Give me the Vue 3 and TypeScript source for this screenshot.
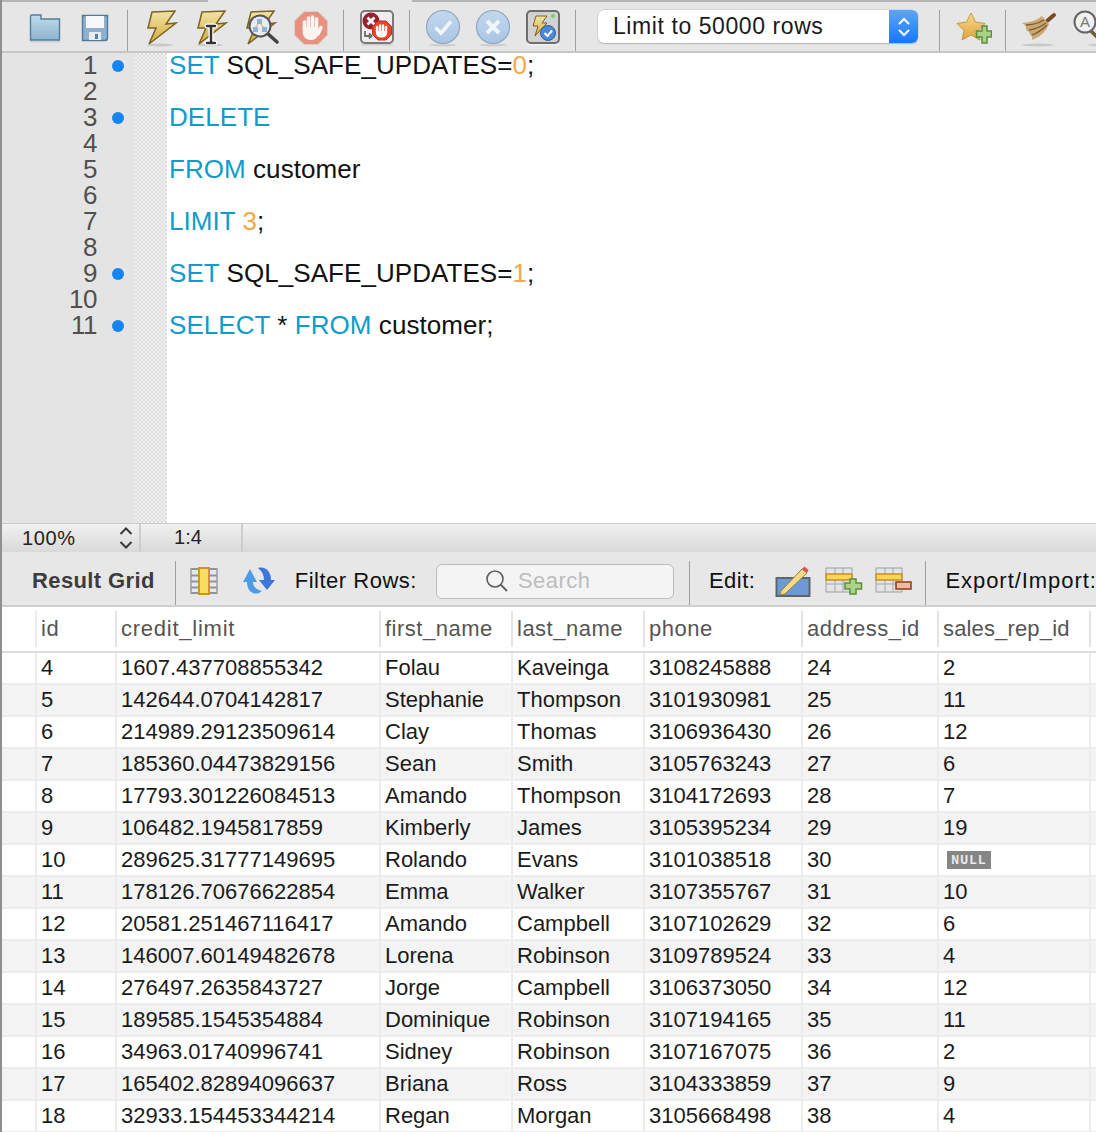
<script setup lang="ts">
const gutter: number[] = [1, 2, 3, 4, 5, 6, 7, 8, 9, 10, 11]
const marked = new Set<number>([1, 3, 9, 11])
const columns: string[] = ['id', 'credit_limit', 'first_name', 'last_name', 'phone', 'address_id', 'sales_rep_id']
const rows: string[][] = [
  ['4', '1607.437708855342', 'Folau', 'Kaveinga', '3108245888', '24', '2'],
  ['5', '142644.0704142817', 'Stephanie', 'Thompson', '3101930981', '25', '11'],
  ['6', '214989.29123509614', 'Clay', 'Thomas', '3106936430', '26', '12'],
  ['7', '185360.04473829156', 'Sean', 'Smith', '3105763243', '27', '6'],
  ['8', '17793.301226084513', 'Amando', 'Thompson', '3104172693', '28', '7'],
  ['9', '106482.1945817859', 'Kimberly', 'James', '3105395234', '29', '19'],
  ['10', '289625.31777149695', 'Rolando', 'Evans', '3101038518', '30', 'NULL'],
  ['11', '178126.70676622854', 'Emma', 'Walker', '3107355767', '31', '10'],
  ['12', '20581.251467116417', 'Amando', 'Campbell', '3107102629', '32', '6'],
  ['13', '146007.60149482678', 'Lorena', 'Robinson', '3109789524', '33', '4'],
  ['14', '276497.2635843727', 'Jorge', 'Campbell', '3106373050', '34', '12'],
  ['15', '189585.1545354884', 'Dominique', 'Robinson', '3107194165', '35', '11'],
  ['16', '34963.01740996741', 'Sidney', 'Robinson', '3107167075', '36', '2'],
  ['17', '165402.82894096637', 'Briana', 'Ross', '3104333859', '37', '9'],
  ['18', '32933.154453344214', 'Regan', 'Morgan', '3105668498', '38', '4'],
]
const boltPath = 'M9 3 L32 2 L23 15 L33 14 L6 35 L13 19 L5 19 Z'
</script>

<template>
  <div class="page">
    <svg class="defs" width="0" height="0">
      <defs>
        <linearGradient id="boltFill" x1="0" y1="0" x2="0" y2="1"><stop offset="0" stop-color="#f2e4a6"/><stop offset="1" stop-color="#d2ab3c"/></linearGradient>
        <linearGradient id="folderFill" x1="0" y1="0" x2="0" y2="1"><stop offset="0" stop-color="#c4dbea"/><stop offset="1" stop-color="#8cb4cf"/></linearGradient>
        <linearGradient id="starFill" x1="0" y1="0" x2="0" y2="1"><stop offset="0" stop-color="#f6d98a"/><stop offset="1" stop-color="#e2a33c"/></linearGradient>
        <linearGradient id="roundFill" x1="0" y1="0" x2="0" y2="1"><stop offset="0" stop-color="#c3d8ee"/><stop offset="1" stop-color="#a9c5e4"/></linearGradient>
      </defs>
    </svg>
    <div class="topline"><span class="tl-a"></span><span class="tl-gap"></span><span class="tl-b"></span></div>
    <div class="toolbar">
      <span class="lead"></span>
      <span class="slot">
        <svg width="32" height="30" viewBox="0 0 32 30"><path d="M1.500 3.500 Q1.500 2 3 2 H12 V6 H30.500 V27 H1.500 Z" fill="url(#folderFill)" stroke="#4d7f9e" stroke-width="1.400"/><rect x="1" y="28" width="30" height="1.500" fill="#cfcfcf"/></svg>
      </span>
      <span class="slot">
        <svg width="28" height="28" viewBox="0 0 28 28"><path d="M1.500 1.500 H26.500 V24 Q26.500 26.500 24 26.500 H1.500 Z" fill="#8fb0cb" stroke="#4f7a9b" stroke-width="1.400"/><rect x="5" y="2" width="18" height="12" fill="#f6f8fb"/><rect x="8" y="18" width="12" height="8" fill="#e6edf2"/><rect x="14" y="20" width="3" height="5" fill="#5b7f9b"/></svg>
      </span>
      <span class="sep"></span>
      <span class="slot">
        <svg width="36" height="38" viewBox="0 0 36 38"><ellipse cx="17" cy="36" rx="13" ry="1.500" fill="#c9c9c9"/><path :d="boltPath" fill="url(#boltFill)" stroke="#7d6220" stroke-width="1.500"/></svg>
      </span>
      <span class="slot">
        <svg width="36" height="38" viewBox="0 0 36 38"><ellipse cx="17" cy="36" rx="13" ry="1.500" fill="#c9c9c9"/><path :d="boltPath" fill="url(#boltFill)" stroke="#7d6220" stroke-width="1.500"/><path d="M14 17 H22 M18 17 V34 M14 34 H22" stroke="#fff" stroke-width="5" stroke-linecap="round"/><path d="M14 17 H22 M18 17 V34 M14 34 H22" stroke="#333" stroke-width="2.400" stroke-linecap="round"/></svg>
      </span>
      <span class="slot">
        <svg width="38" height="38" viewBox="0 0 38 38"><path :d="boltPath" fill="url(#boltFill)" stroke="#7d6220" stroke-width="1.500"/><path d="M25 24 L35 33" stroke="#444" stroke-width="3.500" stroke-linecap="round"/><circle cx="18" cy="17" r="10.500" fill="#e7ecf1" stroke="#555" stroke-width="2"/><rect x="15" y="10" width="5" height="5" fill="#8fb3d9"/><rect x="11" y="18" width="5" height="5" fill="#8fb3d9"/><rect x="20" y="18" width="5" height="5" fill="#8fb3d9"/><path d="M17 14 L13 19 M18 14 L22 19" stroke="#d1ad4c"/></svg>
      </span>
      <span class="slot">
        <svg width="36" height="36" viewBox="0 0 36 36"><path d="M11 1.500 H25 L34.500 11 V25 L25 34.500 H11 L1.500 25 V11 Z" fill="#e9917f" stroke="#d9d0cc" stroke-width="1"/><g stroke="#fbf4f1" stroke-width="3.600" stroke-linecap="round" fill="none"><path d="M11.500 19 V12"/><path d="M15.500 17 V8"/><path d="M19.500 17 V7"/><path d="M23.500 18 V9"/><path d="M25 24 L28 17.500"/></g><path d="M9.700 17 H25.300 V24 Q24 30 17.500 30 Q11 30 9.700 23 Z" fill="#fbf4f1"/></svg>
      </span>
      <span class="sep"></span>
      <span class="slot">
        <svg width="34" height="36" viewBox="0 0 34 36"><rect x="1" y="1" width="32" height="32" rx="4" fill="#eeeeee" stroke="#7a7a7a" stroke-width="2"/><rect x="1" y="34" width="32" height="1.500" fill="#cfcfcf"/><circle cx="11" cy="11" r="8.500" fill="#96232c"/><path d="M7.500 7.500 L14.500 14.500 M14.500 7.500 L7.500 14.500" stroke="#fff" stroke-width="2.800"/><path d="M18 11 H26 L31.500 16.500 V24.500 L26 30 H18 L12.500 24.500 V16.500 Z" fill="#e8452c" stroke="#c2331e"/><path d="M17 22 V17 M20 21 V15.500 M23 21 V15.500 M26 22 V17" stroke="#fff" stroke-width="2.400" stroke-linecap="round"/><path d="M16 21 H27 V24 Q26 27.500 21.500 27.500 Q17 27.500 16 24 Z" fill="#fff"/><path d="M5 21 V26 H11 M9 23.500 L11.500 26 L9 28.500" stroke="#6d6d6d" stroke-width="1.800" fill="none"/></svg>
      </span>
      <span class="sep"></span>
      <span class="slot">
        <svg width="36" height="38" viewBox="0 0 36 38"><ellipse cx="18" cy="36" rx="14" ry="1.500" fill="#cfcfcf"/><circle cx="18" cy="18" r="16.500" fill="url(#roundFill)" stroke="#8da5be" stroke-width="1.200"/><path d="M10.500 18.500 L16 24 L26 12.500" fill="none" stroke="#f1f4f8" stroke-width="3.600"/></svg>
      </span>
      <span class="slot">
        <svg width="36" height="38" viewBox="0 0 36 38"><ellipse cx="18" cy="36" rx="14" ry="1.500" fill="#cfcfcf"/><circle cx="18" cy="18" r="16.500" fill="url(#roundFill)" stroke="#8da5be" stroke-width="1.200"/><path d="M12 12 L24 24 M24 12 L12 24" stroke="#f1f4f8" stroke-width="4"/></svg>
      </span>
      <span class="slot">
        <svg width="34" height="36" viewBox="0 0 34 36"><rect x="1" y="1" width="32" height="32" rx="4" fill="#d2d2d2" stroke="#6e6e6e" stroke-width="2"/><rect x="1" y="34" width="32" height="1.500" fill="#f2f2f2"/><path d="M10 6 H21 L16 13 H21 L9 26 L12 16 H7 Z" fill="url(#boltFill)" stroke="#7d6220"/><circle cx="27" cy="6" r="2" fill="#7bcf5f"/><circle cx="22" cy="23" r="7.500" fill="#4c89d8" stroke="#2e5f9e"/><path d="M18.500 23 L21.500 26 L26 20.500" fill="none" stroke="#fff" stroke-width="2"/></svg>
      </span>
      <span class="sep"></span>
      <div class="limit">
        <span class="limit-text">Limit to 50000 rows</span>
        <span class="stepper">
          <svg width="14" height="22" viewBox="0 0 14 22"><path d="M2 8 L7 3 L12 8 M2 14 L7 19 L12 14" fill="none" stroke="#fff" stroke-width="2"/></svg>
        </span>
      </div>
      <span class="sep sep-limit"></span>
      <span class="slot">
        <svg class="nudge" width="36" height="34" viewBox="0 0 36 34"><path d="M15 2 L19.500 11 L29 12.500 L22 19.500 L24 29 L15 24 L6 29 L8 19.500 L1 12.500 L10.500 11 Z" fill="url(#starFill)" stroke="#c29a45"/><path d="M26 15 H31 V20 H35.500 V26 H31 V32 H26 V26 H20.500 V20 H26 Z" fill="#a6d388" stroke="#5e8f3a" stroke-width="1.500"/></svg>
      </span>
      <span class="sep"></span>
      <span class="slot">
        <svg width="36" height="38" viewBox="0 0 36 38"><ellipse cx="17" cy="36" rx="16" ry="1.500" fill="#c9c9c9"/><path d="M26 12 L33 6" stroke="#7a4b1f" stroke-width="4" stroke-linecap="round"/><path d="M1 14 Q14 13 21 7 L28 15 Q24 26 11 31 Q12 27 9 26 Q9 23 5 21 Q6 17 1 14 Z" fill="#c9a873"/><path d="M5 16 Q14 16 23 11 M8 21 Q17 20 25 14 M11 26 Q19 23 26 16" stroke="#7f5e2f" fill="none" stroke-width="1.300"/></svg>
      </span>
      <span class="slot">
        <svg class="nudge-a" width="34" height="38" viewBox="0 0 34 38"><ellipse cx="24" cy="36" rx="9" ry="1.500" fill="#cfcfcf"/><path d="M18 22 L28 32" stroke="#7a5a2c" stroke-width="3.500"/><circle cx="12" cy="13" r="10.500" fill="#f0f0f0" stroke="#666" stroke-width="2"/><text x="12" y="18" class="a-glyph">A</text></svg>
      </span>
    </div>

    <div class="editor">
      <div class="gutter">
        <div v-for="n in gutter" :key="n" class="gutter-row">
          <span class="gutter-num">{{ n }}</span>
          <span class="dot-cell"><span v-if="marked.has(n)" class="dot"></span></span>
        </div>
      </div>
      <div class="fold"></div>
      <div class="code">
        <div class="line"><span class="kw">SET</span> SQL_SAFE_UPDATES=<span class="num">0</span>;</div>
        <div class="line"><span class="kw">DELETE</span></div>
        <div class="line"><span class="kw">FROM</span> customer</div>
        <div class="line"><span class="kw">LIMIT</span> <span class="num">3</span>;</div>
        <div class="line"><span class="kw">SET</span> SQL_SAFE_UPDATES=<span class="num">1</span>;</div>
        <div class="line"><span class="kw">SELECT</span> * <span class="kw">FROM</span> customer;</div>
      </div>
    </div>

    <div class="status">
      <span class="zoom-cell">
        <span class="zoom-val">100%</span>
        <svg width="16" height="26" viewBox="0 0 16 26"><path d="M2.500 9 L8 3.500 L13.500 9 M2.500 17 L8 22.500 L13.500 17" fill="none" stroke="#3a3a3a" stroke-width="2"/></svg>
      </span>
      <span class="pos-cell">1:4</span>
    </div>

    <div class="result-bar">
      <span class="rg-title">Result Grid</span>
      <span class="rsep rsep-1"></span>
      <svg class="ic-grid" width="28" height="28" viewBox="0 0 28 28"><rect x="1" y="1" width="26" height="26" fill="#e6e8ea"/><path d="M1 2 H27 M1 8.500 H27 M1 14.500 H27 M1 20.500 H27 M1 26 H27" stroke="#8f959a" stroke-width="2"/><path d="M1 1 V27 M27 1 V27" stroke="#9a9ea2" stroke-width="1.500"/><rect x="9" y="1" width="10" height="26" fill="#f9dc62" stroke="#d0922a" stroke-width="2"/></svg>
      <svg class="ic-refresh" width="34" height="28" viewBox="0 0 34 28"><path d="M1 15 L8 2 L15 15 H11 C11 20 15 23 20 24 C15 29 5 27 5 15 Z" fill="#4f9ce6"/><path d="M16 1 C24 -1 29 5 29 13 H33 L25 23 L17 13 H22 C22 8 20 4 16 1 Z" fill="#3b76d8"/></svg>
      <span class="label label-filter">Filter Rows:</span>
      <div class="search">
        <svg width="24" height="24" viewBox="0 0 24 24"><circle cx="10" cy="10" r="8" fill="none" stroke="#5e5e5e" stroke-width="1.600"/><path d="M15.500 15.500 L22 22" stroke="#5e5e5e" stroke-width="1.800"/></svg>
        <span class="search-text">Search</span>
      </div>
      <span class="rsep rsep-2"></span>
      <span class="label label-edit">Edit:</span>
      <svg class="ic-edit" width="36" height="34" viewBox="0 0 36 34"><rect x="1.500" y="14" width="33" height="18" fill="#6d9ad6" stroke="#5b666e" stroke-width="2"/><path d="M6 27 L27 5 L32 9 L10 30 L5 31 Z" fill="#f2d98c" stroke="#9a7d3a"/><path d="M27 5 L29.500 2.500 L33.500 6 L32 9 Z" fill="#d9534f"/></svg>
      <svg class="ic-add" width="38" height="28" viewBox="0 0 38 28"><rect x="1" y="1" width="26" height="24" fill="#e2e4e6" stroke="#9ca0a4"/><path d="M1 17 H27 M10 1 V25 M18 1 V25" stroke="#a4a8ac"/><rect x="1" y="7" width="26" height="6" fill="#f7d658" stroke="#c98f23" stroke-width="1.500"/><path d="M25 12 H31 V16 H36.500 V22 H31 V27 H25 V22 H20 V16 H25 Z" fill="#a9d48a" stroke="#5e8f3a" stroke-width="1.500"/></svg>
      <svg class="ic-del" width="38" height="28" viewBox="0 0 38 28"><rect x="1" y="1" width="26" height="24" fill="#e2e4e6" stroke="#9ca0a4"/><path d="M1 17 H27 M10 1 V25 M18 1 V25" stroke="#a4a8ac"/><rect x="1" y="7" width="26" height="6" fill="#f7d658" stroke="#c98f23" stroke-width="1.500"/><rect x="21" y="15" width="15" height="7" fill="#efb9a2" stroke="#9c4120" stroke-width="1.600"/></svg>
      <span class="rsep rsep-3"></span>
      <span class="label label-export">Export/Import:</span>
    </div>

    <div class="grid">
      <div class="grid-head">
        <span class="cell cell-lead"></span>
        <span v-for="c in columns" :key="c" class="cell head-cell">{{ c }}</span>
        <span class="cell cell-tail"></span>
      </div>
      <div v-for="(r, i) in rows" :key="r[0]" class="grid-row" :class="{ alt: i % 2 === 1 }">
        <span class="cell cell-lead"></span>
        <span v-for="(v, j) in r" :key="j" class="cell">
          <span v-if="v === 'NULL'" class="null">NULL</span>
          <template v-else>{{ v }}</template>
        </span>
        <span class="cell cell-tail"></span>
      </div>
    </div>
  </div>
</template>

<style>
html, body { margin: 0; background: #fff; overflow: hidden; }
</style>

<style scoped>
.page {
  width: 1096px;
  height: 1132px;
  overflow: hidden;
  display: flex;
  flex-direction: column;
  box-sizing: border-box;
  border-left: 2px solid #8f8f8f;
  font-family: "Liberation Sans", Arial, sans-serif;
  color: #111;
  background: #fff;
}
.defs { display: block; flex: none; }
.topline { height: 2px; flex: none; display: flex; background: #e6e6e6; margin-left: -2px; }
.tl-a { width: 208px; background: #b4b4b4; }
.tl-gap { width: 204px; }
.tl-b { flex: 1; background: #b4b4b4; }

.toolbar {
  flex: none;
  height: 49px;
  display: flex;
  align-items: stretch;
  background: #e6e6e6;
  border-bottom: 2px solid #c6c6c6;
}
.lead { width: 18px; flex: none; }
.slot { width: 50px; flex: none; display: flex; align-items: center; justify-content: center; padding-top: 2px; box-sizing: border-box; }
.sep { width: 1px; flex: none; background: #9f9f9f; margin: 8px 8px 0 7px; }
.sep-limit { margin-left: 21px; }
.nudge { margin-left: 2px; }
.nudge-a { margin-left: 2px; }
.limit {
  flex: none;
  width: 320px;
  height: 33px;
  margin: 8px 0 0 14px;
  display: flex;
  background: #fff;
  border-radius: 6px;
  box-shadow: 0 0 0 0.5px #c4c4c4, 0 1px 1px #a9a9a9;
  overflow: hidden;
}
.limit-text { flex: 1; padding-left: 15px; font-size: 23px; line-height: 32px; letter-spacing: 0.58px; color: #1a1a1a; }
.stepper { width: 29px; flex: none; display: flex; align-items: center; justify-content: center; background: linear-gradient(#5fa5f8, #1678fb); }
.a-glyph { font-size: 15px; text-anchor: middle; fill: #777; font-family: "Liberation Sans", sans-serif; }

.editor { flex: none; height: 470px; display: flex; background: #fff; overflow: hidden; }
.gutter { width: 133px; flex: none; background: #e4e4e4; box-sizing: border-box; }
.gutter-row { height: 26px; display: flex; align-items: center; }
.gutter-row:first-child { margin-top: -1px; }
.gutter-num { flex: none; width: 95px; text-align: right; font-size: 26px; line-height: 26px; color: #505050; letter-spacing: -0.5px; }
.dot-cell { width: 36px; display: flex; justify-content: center; margin-left: 3px; }
.dot { width: 12px; height: 12px; border-radius: 50%; background: #1584f6; position: relative; top: 1px; }
.fold {
  width: 32px;
  flex: none;
  background-color: #f0f0f0;
  background-image: conic-gradient(#dedede 25%, transparent 0 50%, #dedede 0 75%, transparent 0);
  background-size: 4px 4px;
}
.code { flex: 1; padding-left: 2px; margin-top: -1px; }
.line { height: 52px; font-size: 26px; line-height: 26px; color: #111; white-space: pre; letter-spacing: 0.06px; }
.kw { color: #0e9ccb; }
.num { color: #f3a94a; }

.status {
  flex: none;
  height: 29px;
  display: flex;
  background: linear-gradient(#f1f1f1, #d9d9d9);
  border-top: 1px solid #cacaca;
  box-sizing: border-box;
  font-size: 20px;
  color: #222;
}
.zoom-cell { width: 139px; flex: none; display: flex; align-items: center; justify-content: space-between; padding: 0 5px 0 20px; box-sizing: border-box; border-right: 2px solid #cdcdcd; }
.zoom-val { letter-spacing: 0.6px; }
.pos-cell { width: 102px; flex: none; text-align: center; line-height: 26px; border-right: 2px solid #cdcdcd; box-sizing: border-box; padding-right: 6px; }

.result-bar {
  flex: none;
  height: 55px;
  display: flex;
  align-items: center;
  background: #e7e7e7;
  border-bottom: 2px solid #cfcfcf;
  box-sizing: border-box;
  white-space: nowrap;
  padding-top: 5px;
}
.rg-title { margin-left: 30px; font-size: 22px; font-weight: 700; color: #3c3c3c; letter-spacing: 0.38px; }
.rsep { width: 1px; height: 44px; background: #9f9f9f; flex: none; align-self: flex-end; }
.rsep-1 { margin-left: 20px; }
.ic-grid { margin-left: 14px; flex: none; }
.ic-refresh { margin-left: 24px; flex: none; }
.label { font-size: 22px; color: #111; letter-spacing: 0.5px; flex: none; }
.label-filter { margin-left: 19px; }
.search {
  flex: none;
  width: 238px;
  height: 35px;
  margin-left: 19px;
  box-sizing: border-box;
  display: flex;
  align-items: center;
  gap: 9px;
  background: #f4f4f4;
  border: 1px solid #bcbcbc;
  border-radius: 6px;
  padding-left: 48px;
}
.search-text { font-size: 22px; color: #bdbdbd; letter-spacing: 0.5px; }
.rsep-2 { margin-left: 15px; }
.label-edit { margin-left: 19px; }
.ic-edit { margin-left: 20px; flex: none; }
.ic-add { margin-left: 14px; flex: none; }
.ic-del { margin-left: 12px; flex: none; }
.rsep-3 { margin-left: 12px; }
.label-export { margin-left: 19px; letter-spacing: 0.95px; }

.grid { flex: 1; display: flex; flex-direction: column; background: #fff; }
.grid-head { flex: none; height: 46px; display: flex; align-items: stretch; border-bottom: 2px solid #dcdcdc; box-sizing: border-box; padding: 4px 0; }
.grid-row { flex: none; height: 32px; display: flex; align-items: stretch; border-bottom: 2px solid #ececec; box-sizing: border-box; background: #fff; }
.grid-row.alt { background: #f3f3f3; }
.cell {
  box-sizing: border-box;
  flex: none;
  border-right: 2px solid #ececec;
  padding-left: 4px;
  font-size: 22px;
  line-height: 30px;
  color: #1b1b1b;
  white-space: nowrap;
  overflow: hidden;
}
.head-cell { color: #555; line-height: 36px; letter-spacing: 0.5px; border-right-color: #e4e4e4; }
.cell-lead { width: 35px; padding: 0; }
.cell:nth-child(2) { width: 80px; }
.cell:nth-child(3) { width: 264px; }
.cell:nth-child(4) { width: 132px; }
.cell:nth-child(5) { width: 132px; }
.cell:nth-child(6) { width: 158px; }
.cell:nth-child(7) { width: 136px; }
.cell:nth-child(8) { width: 152px; }
.head-cell:nth-child(3) { letter-spacing: 0.75px; }
.head-cell:nth-child(8) { letter-spacing: 0.15px; }
.cell-tail { flex: 1; border-right: 0; }
.null {
  display: inline-block;
  vertical-align: top;
  margin: 6px 0 0 4px;
  width: 44px;
  height: 18px;
  background: #858585;
  color: #e9e9e9;
  font-family: "DejaVu Sans Mono", monospace;
  font-size: 13px;
  font-weight: 700;
  line-height: 18px;
  text-align: center;
  letter-spacing: 1px;
}
</style>
